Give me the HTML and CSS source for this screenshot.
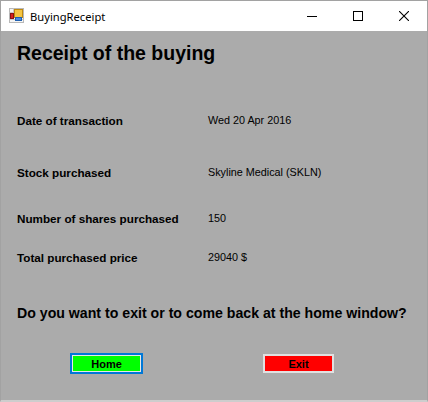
FILE: index.html
```html
<!DOCTYPE html>
<html>
<head>
<meta charset="utf-8">
<link rel="stylesheet" href="styles.css">
</head>
<body>
<div class="window">
  <div class="titlebar">
    <svg class="app-icon" width="16" height="16" viewBox="0 0 16 16">
      <rect x="0.5" y="0.5" width="14" height="14" fill="#f4f4f4" stroke="#b8b8b8"/>
      <line x1="0.5" y1="4.5" x2="5" y2="4.5" stroke="#c8c8c8"/>
      <line x1="4.5" y1="0.5" x2="4.5" y2="4.5" stroke="#c8c8c8"/>
      <line x1="0.5" y1="11.5" x2="14.5" y2="11.5" stroke="#c8c8c8"/>
      <rect x="1.5" y="5.5" width="3" height="5" fill="#d42020" stroke="#8a1010"/>
      <rect x="5.5" y="1.5" width="8" height="8" fill="#f5c542" stroke="#c08a10"/>
      <rect x="6.5" y="9.5" width="6" height="3" fill="#4a8ae0" stroke="#2060b0"/>
    </svg>
    <span class="title-text">BuyingReceipt</span>
    <div class="controls">
      <div class="ctrl"><svg width="10" height="10" viewBox="0 0 10 10"><line x1="0" y1="5.5" x2="10" y2="5.5" stroke="#000" stroke-width="1"/></svg></div>
      <div class="ctrl"><svg width="10" height="10" viewBox="0 0 10 10"><rect x="0.5" y="0.5" width="9" height="9" fill="none" stroke="#000" stroke-width="1"/></svg></div>
      <div class="ctrl"><svg width="10" height="10" viewBox="0 0 10 10"><path d="M0 0 L10 10 M10 0 L0 10" stroke="#000" stroke-width="1.1"/></svg></div>
    </div>
  </div>
  <div class="client">
    <h1 class="heading">Receipt of the buying</h1>
    <div class="row r1"><span class="label">Date of transaction</span><span class="value">Wed 20 Apr 2016</span></div>
    <div class="row r2"><span class="label">Stock purchased</span><span class="value">Skyline Medical (SKLN)</span></div>
    <div class="row r3"><span class="label">Number of shares purchased</span><span class="value">150</span></div>
    <div class="row r4"><span class="label">Total purchased price</span><span class="value">29040 $</span></div>
    <div class="question">Do you want to exit or to come back at the home window?</div>
    <div class="buttons">
      <button class="btn btn-home">Home</button>
      <button class="btn btn-exit">Exit</button>
    </div>
  </div>
</div>
</body>
</html>
```
FILE: styles.css
```css
html, body {
  margin: 0;
  padding: 0;
  background: #ababab;
}
.window {
  width: 428px;
  height: 402px;
  box-sizing: border-box;
  border: 1px solid #a2a2a2;
  border-bottom: 2px solid #cdcdcd;
  display: flex;
  flex-direction: column;
  background: #ababab;
  font-family: "Liberation Sans", Arial, sans-serif;
  color: #000;
}
.titlebar {
  height: 30px;
  background: #fff;
  display: flex;
  align-items: center;
  flex-shrink: 0;
}
.app-icon {
  margin-left: 8px;
  margin-right: 5px;
}
.title-text {
  font-family: "Noto Sans", "Open Sans", sans-serif;
  font-size: 11.2px;
  color: #000;
}
.controls {
  margin-left: auto;
  display: flex;
  height: 30px;
}
.ctrl {
  width: 46px;
  height: 30px;
  display: flex;
  align-items: center;
  justify-content: center;
}
.client {
  flex: 1;
  padding: 10px 0 0 16px;
  display: flex;
  flex-direction: column;
}
.heading {
  margin: 0;
  font-size: 19.5px;
  line-height: 24px;
  font-weight: bold;
}
.row {
  height: 20px;
  display: flex;
  align-items: center;
}
.r1 { margin-top: 45px; }
.r2 { margin-top: 32px; }
.r3 { margin-top: 26px; }
.r4 { margin-top: 19px; }
.label {
  width: 191px;
  flex-shrink: 0;
  font-size: 11.7px;
  font-weight: bold;
}
.value {
  font-size: 10.8px;
}
.question {
  margin-top: 36px;
  height: 20px;
  display: flex;
  align-items: center;
  font-size: 14.15px;
  font-weight: bold;
  white-space: nowrap;
}
.buttons {
  margin-top: 30px;
  display: flex;
  align-items: flex-start;
}
.btn {
  font-family: "Liberation Sans", Arial, sans-serif;
  font-size: 11px;
  font-weight: bold;
  color: #000;
  padding: 0;
  box-sizing: border-box;
  display: flex;
  align-items: center;
  justify-content: center;
}
.btn-home {
  margin-left: 53px;
  width: 73px;
  height: 21px;
  background: #00ff00;
  border: 2px solid #0078d7;
  box-shadow: inset 0 0 0 1px #e8e8e8;
}
.btn-exit {
  margin-left: 120px;
  margin-top: 1px;
  width: 71px;
  height: 19px;
  background: #ff0000;
  border: 2px solid #e1e1e1;
}
```
